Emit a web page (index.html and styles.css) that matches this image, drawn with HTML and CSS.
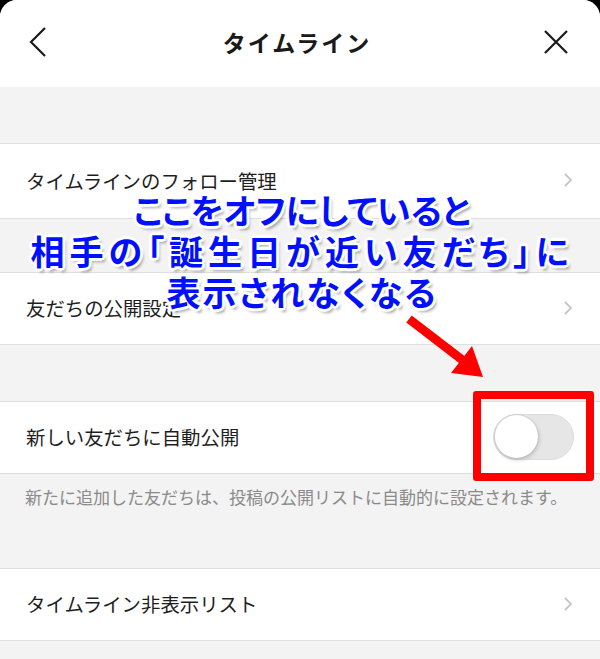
FILE: index.html
```html
<!DOCTYPE html>
<html lang="ja">

<head>
    <meta charset="UTF-8">
    <meta name="viewport" content="width=device-width, initial-scale=1.0">
    <link rel="stylesheet" href="styles.css">
    <title>タイムライン</title>
</head>

<body>
    <div class="screen">
        <header class="nav">
            <button class="nav-btn" aria-label="戻る">
                <svg width="18" height="30" viewBox="0 0 18 30">
                    <polyline points="16,1 2,15 16,29" fill="none" stroke="#1a1a1a" stroke-width="2.2" />
                </svg>
            </button>
            <h1 class="nav-title">タイムライン</h1>
            <button class="nav-btn" aria-label="閉じる">
                <svg width="24" height="24" viewBox="0 0 24 24">
                    <path d="M1 1 L23 23 M23 1 L1 23" fill="none" stroke="#1a1a1a" stroke-width="2.2" />
                </svg>
            </button>
        </header>

        <div class="gap"></div>
        <div class="group">
            <div class="row row-first">
                <span class="row-label">タイムラインのフォロー管理</span>
                <svg class="row-chevron" width="10" height="16" viewBox="0 0 10 16">
                    <polyline points="2,2 8,8 2,14" fill="none" stroke="#c6c6c6" stroke-width="1.8" />
                </svg>
            </div>
        </div>

        <div class="gap gap-short"></div>
        <div class="group">
            <div class="row">
                <span class="row-label">友だちの公開設定</span>
                <svg class="row-chevron" width="10" height="16" viewBox="0 0 10 16">
                    <polyline points="2,2 8,8 2,14" fill="none" stroke="#c6c6c6" stroke-width="1.8" />
                </svg>
            </div>
        </div>

        <div class="gap"></div>
        <div class="group">
            <div class="row">
                <span class="row-label">新しい友だちに自動公開</span>
                <span class="switch"><span class="switch-knob"></span></span>
            </div>
        </div>
        <p class="note">新たに追加した友だちは、投稿の公開リストに自動的に設定されます。</p>

        <div class="group">
            <div class="row">
                <span class="row-label">タイムライン非表示リスト</span>
                <svg class="row-chevron" width="10" height="16" viewBox="0 0 10 16">
                    <polyline points="2,2 8,8 2,14" fill="none" stroke="#c6c6c6" stroke-width="1.8" />
                </svg>
            </div>
        </div>

        <!-- notes drawn on top of the settings screen -->
        <div class="callout">
            <div class="callout-line line-1">ここをオフにしていると</div>
            <div class="callout-line line-2">相手の「誕生日が近い友だち」に</div>
            <div class="callout-line line-3">表示されなくなる</div>
        </div>
        <svg class="pointer" width="90" height="75" viewBox="400 310 90 75">
            <line x1="409" y1="319" x2="465" y2="362" stroke="#ff0000" stroke-width="9" />
            <polygon points="483,377 451,373 472,346" fill="#ff0000" />
        </svg>
        <div class="highlight"></div>
    </div>
</body>

</html>
```

FILE: styles.css
```css
* {
    box-sizing: border-box;
    margin: 0;
    padding: 0;
}

body {
    width: 600px;
    height: 659px;
    overflow: hidden;
    background-color: #000;
    font-family: "Noto Sans CJK JP", "Noto Sans", sans-serif;
    color: #1a1a1a;
}

.screen {
    position: relative;
    height: 659px;
    background-color: #f3f3f3;
    border-radius: 17px 17px 0 0;
    overflow: hidden;
}

/* top bar */
.nav {
    display: flex;
    align-items: center;
    justify-content: space-between;
    height: 87px;
    padding: 0 32px 3px 26px;
    background-color: #fff;
}

.nav-btn {
    display: flex;
    align-items: center;
    justify-content: center;
    width: 24px;
    height: 30px;
    border: none;
    background: none;
}

.nav-title {
    font-size: 23px;
    font-weight: 700;
    letter-spacing: 2px;
    color: #1a1a1a;
}

/* list */
.gap {
    height: 56px;
}

.gap-short {
    height: 53px;
}

.group {
    background-color: #fff;
    border-top: 1px solid #dedede;
    border-bottom: 1px solid #dedede;
}

.row {
    display: flex;
    align-items: center;
    justify-content: space-between;
    height: 71px;
    padding: 0 27px 2px 26px;
}

.row-first {
    height: 74px;
}

.row-label {
    font-size: 19.4px;
    color: #1e1e1e;
}

.row-chevron {
    flex-shrink: 0;
}

.note {
    height: 94px;
    padding: 11px 20px 0 25px;
    font-size: 17px;
    line-height: 24px;
    color: #8a8a8a;
}

/* toggle, off state */
.switch {
    display: flex;
    align-items: center;
    width: 81px;
    height: 46px;
    margin-right: -1px;
    padding: 1px;
    border-radius: 23px;
    background-color: #e6e6e6;
    border: 1px solid #dcdcdc;
}

.switch-knob {
    width: 43px;
    height: 43px;
    border-radius: 50%;
    background-color: #fff;
    box-shadow: 1px 2px 4px rgba(0, 0, 0, 0.18), 0 0 0 1px rgba(0, 0, 0, 0.05);
}

/* annotation */
.callout {
    position: absolute;
    top: 189px;
    left: 0;
    right: 0;
    padding-left: 4px;
    text-align: center;
    font-size: 34px;
    font-weight: 700;
    line-height: 41px;
    font-feature-settings: "palt";
    color: #0010ff;
    text-shadow:
        2px 0 0 #fff, -2px 0 0 #fff, 0 2px 0 #fff, 0 -2px 0 #fff,
        2px 2px 0 #fff, -2px -2px 0 #fff, 2px -2px 0 #fff, -2px 2px 0 #fff,
        3px 0 1px #fff, -3px 0 1px #fff, 0 3px 1px #fff, 0 -3px 1px #fff,
        3px 4px 3px rgba(0, 0, 0, 0.35);
}

.line-1 {
    letter-spacing: 0;
}

.line-2 {
    letter-spacing: 5px;
}

.line-3 {
    letter-spacing: 2px;
}

.pointer {
    position: absolute;
    left: 400px;
    top: 310px;
}

.highlight {
    position: absolute;
    left: 473px;
    top: 391px;
    width: 121px;
    height: 90px;
    border: 8px solid #ff0000;
    border-radius: 3px;
}
```
